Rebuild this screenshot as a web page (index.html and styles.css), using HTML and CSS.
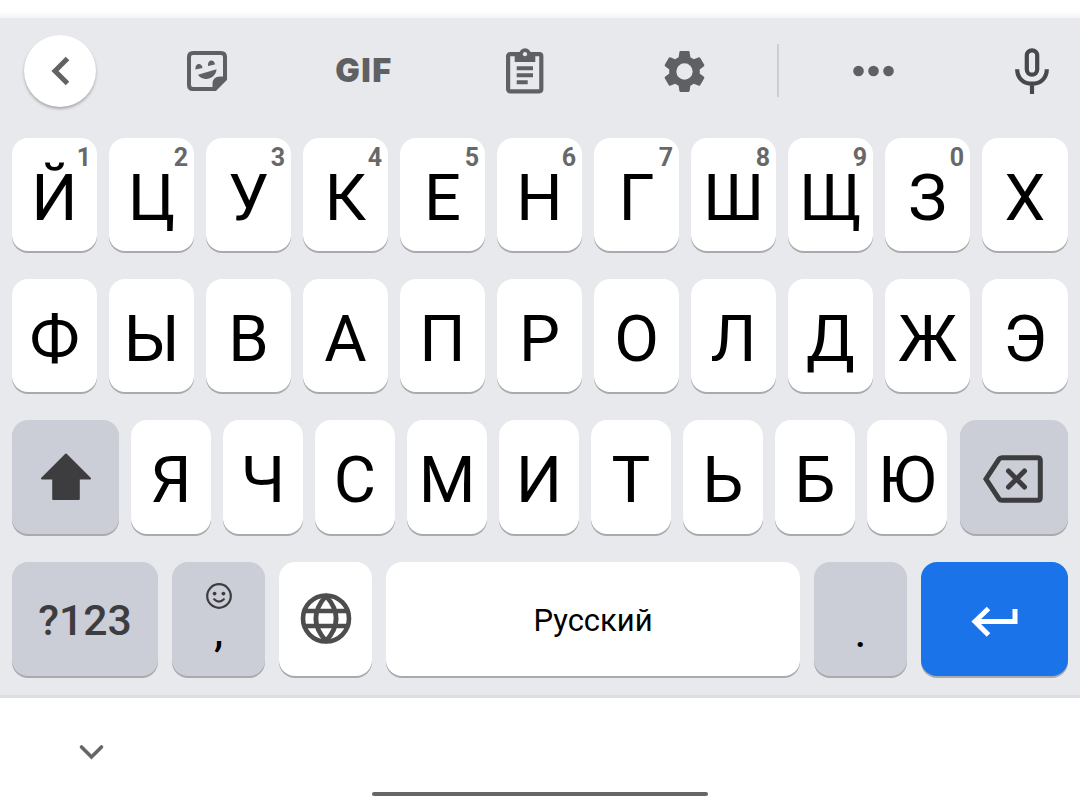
FILE: index.html
```html
<!DOCTYPE html>
<html lang="ru">
<head>
  <meta charset="UTF-8">
  <meta name="viewport" content="width=device-width, initial-scale=1.0">
  <title>Keyboard</title>
  <link rel="stylesheet" href="styles.css">
</head>
<body>
  <div class="top"></div>
  <div class="keyboard">
    <div class="toolbar">
      <div class="tool">
        <div class="back">
          <svg width="72" height="72" viewBox="0 0 72 72"><path d="M43.500 23.500 31 36l12.500 12.500" fill="none" stroke="#626262" stroke-width="5"/></svg>
        </div>
      </div>
      <div class="tool">
        <svg width="40" height="40" viewBox="0 0 40 40">
          <path d="M6 2H34Q38 2 38 6V28L28 38H6Q2 38 2 34V6Q2 2 6 2Z" fill="none" stroke="#5f6064" stroke-width="4"/>
          <path d="M25.500 40V33Q25.500 25.500 33 25.500H40V28.500L28.500 40Z" fill="#5f6064"/>
          <path d="M8.500 18.500C8 11.500 15 11.500 15.500 17ZM21 15C20.500 8 27.500 8 28 13.500ZM11 23.800 29.600 18.300C29 25 23 28.500 18.500 28Q13.500 27.500 11 23.800Z" fill="#5f6064"/>
        </svg>
      </div>
      <div class="tool"><span class="gif">GIF</span></div>
      <div class="tool">
        <svg width="38" height="46" viewBox="0 0 38 46">
          <rect x="2.100" y="6.100" width="33.200" height="37.200" rx="2" fill="none" stroke="#5f6064" stroke-width="4.200"/>
          <path d="M8.700 5H29.300V14H8.700Z" fill="#5f6064"/>
          <circle cx="19" cy="6" r="5.800" fill="#5f6064"/>
          <circle cx="19" cy="6.200" r="2.100" fill="#e8e9ed"/>
          <path d="M10.700 18.300H27v4H10.700ZM10.700 25.300H27v4H10.700ZM10.700 32.300H21.700v4H10.700Z" fill="#5f6064"/>
        </svg>
      </div>
      <div class="tool gear">
        <svg width="49" height="49" viewBox="0 0 24 24"><path fill="#5f6064" d="M19.430 12.980c.04-.32.07-.64.07-.98s-.03-.66-.07-.98l2.110-1.650c.19-.15.24-.42.12-.64l-2-3.460c-.12-.22-.39-.3-.61-.22l-2.490 1c-.52-.4-1.080-.73-1.690-.98l-.38-2.650C14.460 2.180 14.250 2 14 2h-4c-.25 0-.46.18-.49.42l-.38 2.650c-.61.25-1.170.59-1.690.98l-2.490-1c-.23-.09-.49 0-.61.22l-2 3.460c-.13.22-.07.49.12.64l2.110 1.650c-.04.32-.07.65-.07.98s.03.66.07.98l-2.110 1.650c-.19.15-.24.42-.12.64l2 3.460c.12.22.39.3.61.22l2.490-1c.52.4 1.080.73 1.690.98l.38 2.650c.03.24.24.42.49.42h4c.25 0 .46-.18.49-.42l.38-2.650c.61-.25 1.170-.59 1.690-.98l2.490 1c.23.09.49 0 .61-.22l2-3.460c.12-.22.07-.49-.12-.64l-2.110-1.650zM12 16a4 4 0 1 1 0-8 4 4 0 0 1 0 8z"/></svg>
      </div>
      <div class="tool"><div class="divider"></div></div>
      <div class="tool">
        <svg width="42" height="12" viewBox="0 0 42 12" fill="#5f6064"><circle cx="5.500" cy="6" r="5.300"/><circle cx="20.500" cy="6" r="5.300"/><circle cx="35.500" cy="6" r="5.300"/></svg>
      </div>
      <div class="tool mic">
        <svg width="36" height="48" viewBox="0 0 36 48" fill="none" stroke="#47484b" stroke-width="4.200">
          <rect x="12.800" y="3.300" width="10.400" height="24.400" rx="5.200"/>
          <path d="M3.200 22.300C3.200 31.500 9.800 36.700 18 36.700S32.800 31.500 32.800 22.300M18 37V47"/>
        </svg>
      </div>
    </div>

    <div class="row">
      <div class="key">Й<span class="hint">1</span></div>
      <div class="key">Ц<span class="hint">2</span></div>
      <div class="key">У<span class="hint">3</span></div>
      <div class="key">К<span class="hint">4</span></div>
      <div class="key">Е<span class="hint">5</span></div>
      <div class="key">Н<span class="hint">6</span></div>
      <div class="key">Г<span class="hint">7</span></div>
      <div class="key">Ш<span class="hint">8</span></div>
      <div class="key">Щ<span class="hint">9</span></div>
      <div class="key">З<span class="hint">0</span></div>
      <div class="key">Х</div>
    </div>
    <div class="row">
      <div class="key">Ф</div>
      <div class="key">Ы</div>
      <div class="key">В</div>
      <div class="key">А</div>
      <div class="key">П</div>
      <div class="key">Р</div>
      <div class="key">О</div>
      <div class="key">Л</div>
      <div class="key">Д</div>
      <div class="key">Ж</div>
      <div class="key">Э</div>
    </div>
    <div class="row row3">
      <div class="key dark icon shift">
        <svg width="52" height="48" viewBox="0 0 52 48"><path d="M26 1.500 50 25.500H38.800V46H13.200V25.500H2Z" fill="#3d3d40" stroke="#3d3d40" stroke-width="2" stroke-linejoin="round"/></svg>
      </div>
      <div class="key">Я</div>
      <div class="key">Ч</div>
      <div class="key">С</div>
      <div class="key">М</div>
      <div class="key">И</div>
      <div class="key">Т</div>
      <div class="key">Ь</div>
      <div class="key">Б</div>
      <div class="key">Ю</div>
      <div class="key dark icon erase">
        <svg width="60" height="48" viewBox="0 0 60 48" fill="none" stroke="#3d3d40" stroke-width="5">
          <path d="M19 2.700H54.500Q57.300 2.700 57.300 5.500V42.500Q57.300 45.300 54.500 45.300H19Q17 45.300 16 43.800L3 24 16 4.200Q17 2.700 19 2.700Z"/>
          <path d="M25.500 16 41.500 32M41.500 16 25.500 32" stroke-linecap="round"/>
        </svg>
      </div>
    </div>
    <div class="row row4">
      <div class="key dark symbols">?123</div>
      <div class="key dark small comma">
        <svg width="26" height="26" viewBox="0 0 26 26"><circle cx="13" cy="13" r="11.800" fill="none" stroke="#3d3d40" stroke-width="2.200"/><circle cx="8.600" cy="10.600" r="1.900" fill="#3d3d40"/><circle cx="17.400" cy="10.600" r="1.900" fill="#3d3d40"/><path d="M8.200 16.200Q13 21 17.800 16.200" fill="none" stroke="#3d3d40" stroke-width="2.200" stroke-linecap="round"/></svg>
        <span>,</span>
      </div>
      <div class="key small icon">
        <svg width="52" height="52" viewBox="0 0 52 52" fill="none" stroke="#4d4d4d" stroke-width="4.600" stroke-linejoin="round"><circle cx="26" cy="25.500" r="23"/><path d="M26 3C12.500 18 12.500 33 26 48C39.500 33 39.500 18 26 3ZM5 18H47M5 33H47"/></svg>
      </div>
      <div class="key space">Русский</div>
      <div class="key dark small dot"><span>.</span></div>
      <div class="key enter">
        <svg width="48" height="30" viewBox="0 0 48 30" fill="none" stroke="#fff" stroke-width="5"><path d="M44 2V14.500H4M17.500 1.500 4 14.500 17.500 28"/></svg>
      </div>
    </div>
  </div>
  <div class="navbar">
    <svg class="hide" width="26" height="16" viewBox="0 0 26 16"><path d="M3.500 3 13.500 13 23.500 3" fill="none" stroke="#666" stroke-width="3.600" stroke-linecap="round"/></svg>
    <div class="home"></div>
  </div>
</body>
</html>
```
FILE: styles.css
```css
* {
  box-sizing: border-box;
}
body {
  margin: 0;
  width: 1080px;
  height: 809px;
  overflow: hidden;
  background: #fff;
  font-family: Roboto, sans-serif;
}
svg {
  display: block;
  overflow: visible;
}
.top {
  height: 18px;
  background: linear-gradient(#fff 11px, #f4f4f5);
}
.keyboard {
  height: 680px;
  background: #e8e9ed;
  border-bottom: 3px solid #dddee0;
}

/* toolbar */
.toolbar {
  display: grid;
  grid-template-columns: 120px 173px 142px 179px 140px 48px 143px 135px;
  height: 105px;
  margin-bottom: 15px;
}
.tool {
  display: flex;
  align-items: center;
  justify-content: center;
}
.gear {
  padding-top: 1px;
}
.back {
  width: 72px;
  height: 72px;
  border-radius: 50%;
  background: #fff;
  box-shadow: 0 2px 3px rgba(0, 0, 0, 0.28);
}
.gif {
  font-family: Inter, sans-serif;
  font-weight: 900;
  font-size: 32.500px;
  letter-spacing: 1.500px;
  color: #5f6064;
}
.divider {
  width: 2px;
  height: 53px;
  background: #cdced1;
}
.mic {
  justify-content: flex-end;
  padding-right: 30px;
}

/* keys */
.row {
  display: flex;
  gap: 12px;
  height: 113px;
  margin: 0 12px 28px;
}
.key {
  position: relative;
  display: flex;
  flex: 0 0 85px;
  align-items: center;
  justify-content: center;
  padding-top: 6px;
  border-radius: 16px;
  background: #fff;
  box-shadow: 0 2px 0 #a9aaad;
  color: #000;
  font-size: 65px;
  line-height: 76px;
}
.key:last-child {
  flex: 1;
}
.hint {
  position: absolute;
  top: 7px;
  right: 6px;
  font-size: 25px;
  line-height: 25px;
  font-weight: 700;
  color: #686868;
}
.dark {
  background: #cbced6;
}
.icon {
  padding-top: 0;
}
.row3 {
  height: 114px;
}
.row3 .key {
  flex: 0 0 80px;
}
.row3 .shift {
  flex: 0 0 107px;
}
.row3 .erase {
  flex: 0 0 108px;
  margin-left: auto;
  padding-top: 4px;
  padding-right: 2px;
}
.row4 {
  gap: 14px;
  height: 114px;
  margin-bottom: 0;
}
.small {
  flex: 0 0 93px;
}
.symbols {
  flex: 0 0 146px;
  padding-top: 2px;
  font-size: 42.700px;
  font-weight: 500;
  color: #3d3d40;
}
.comma {
  flex-direction: column;
  align-items: center;
  justify-content: flex-start;
  padding-top: 21px;
  font-size: 47px;
  line-height: 41px;
}
.dot {
  align-items: flex-start;
  padding-top: 41px;
  font-size: 47px;
  line-height: 55px;
}
.space {
  flex: 0 0 414px;
  padding-top: 4px;
  font-size: 31px;
}
.enter {
  background: #1a73e9;
}

/* bottom bar */
.navbar {
  display: grid;
  grid-template-columns: 372px 336px 1fr;
  height: 111px;
}
.hide {
  margin: 46px 0 0 78px;
}
.home {
  align-self: end;
  height: 4px;
  margin-bottom: 13px;
  border-radius: 2px;
  background: #666;
}
```
